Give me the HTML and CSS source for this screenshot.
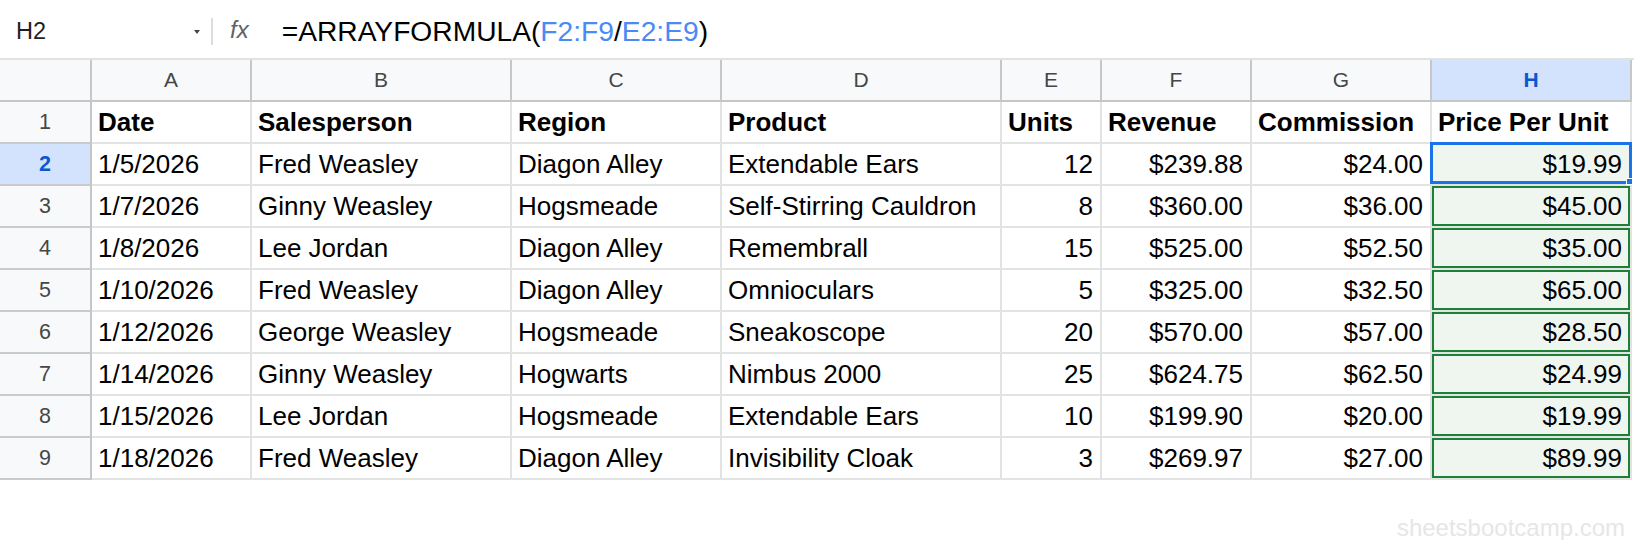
FILE: index.html
```html
<!DOCTYPE html>
<html>
<head>
<meta charset="utf-8">
<link rel="stylesheet" href="styles.css">
</head>
<body>
<div class="formula-bar">
  <div class="namebox"><span class="ref">H2</span><span class="caret"></span></div>
  <div class="sep"></div>
  <div class="fx">fx</div>
  <div class="formula">=ARRAYFORMULA(<span class="rng">F2:F9</span>/<span class="rng">E2:E9</span>)</div>
</div>
<div class="grid">
  <div class="ch corner"></div>
  <div class="ch">A</div><div class="ch">B</div><div class="ch">C</div><div class="ch">D</div>
  <div class="ch">E</div><div class="ch">F</div><div class="ch">G</div><div class="ch ch-sel">H</div>

  <div class="rh">1</div>
  <div class="c b">Date</div><div class="c b">Salesperson</div><div class="c b">Region</div><div class="c b">Product</div>
  <div class="c b">Units</div><div class="c b">Revenue</div><div class="c b">Commission</div><div class="c b">Price Per Unit</div>

  <div class="rh rh-sel">2</div>
  <div class="c">1/5/2026</div><div class="c">Fred Weasley</div><div class="c">Diagon Alley</div><div class="c">Extendable Ears</div>
  <div class="c n">12</div><div class="c n">$239.88</div><div class="c n">$24.00</div><div class="c n out active">$19.99</div>

  <div class="rh">3</div>
  <div class="c">1/7/2026</div><div class="c">Ginny Weasley</div><div class="c">Hogsmeade</div><div class="c">Self-Stirring Cauldron</div>
  <div class="c n">8</div><div class="c n">$360.00</div><div class="c n">$36.00</div><div class="c n out">$45.00</div>

  <div class="rh">4</div>
  <div class="c">1/8/2026</div><div class="c">Lee Jordan</div><div class="c">Diagon Alley</div><div class="c">Remembrall</div>
  <div class="c n">15</div><div class="c n">$525.00</div><div class="c n">$52.50</div><div class="c n out">$35.00</div>

  <div class="rh">5</div>
  <div class="c">1/10/2026</div><div class="c">Fred Weasley</div><div class="c">Diagon Alley</div><div class="c">Omnioculars</div>
  <div class="c n">5</div><div class="c n">$325.00</div><div class="c n">$32.50</div><div class="c n out">$65.00</div>

  <div class="rh">6</div>
  <div class="c">1/12/2026</div><div class="c">George Weasley</div><div class="c">Hogsmeade</div><div class="c">Sneakoscope</div>
  <div class="c n">20</div><div class="c n">$570.00</div><div class="c n">$57.00</div><div class="c n out">$28.50</div>

  <div class="rh">7</div>
  <div class="c">1/14/2026</div><div class="c">Ginny Weasley</div><div class="c">Hogwarts</div><div class="c">Nimbus 2000</div>
  <div class="c n">25</div><div class="c n">$624.75</div><div class="c n">$62.50</div><div class="c n out">$24.99</div>

  <div class="rh">8</div>
  <div class="c">1/15/2026</div><div class="c">Lee Jordan</div><div class="c">Hogsmeade</div><div class="c">Extendable Ears</div>
  <div class="c n">10</div><div class="c n">$199.90</div><div class="c n">$20.00</div><div class="c n out">$19.99</div>

  <div class="rh">9</div>
  <div class="c">1/18/2026</div><div class="c">Fred Weasley</div><div class="c">Diagon Alley</div><div class="c">Invisibility Cloak</div>
  <div class="c n">3</div><div class="c n">$269.97</div><div class="c n">$27.00</div><div class="c n out">$89.99</div>
</div>
<div class="watermark">sheetsbootcamp.com</div>
</body>
</html>
```
FILE: styles.css
```css
html, body {
  margin: 0;
  padding: 0;
  background: #ffffff;
}
body {
  font-family: "Liberation Sans", Arial, sans-serif;
  color: #000000;
  width: 1634px;
  overflow: hidden;
}
.formula-bar {
  height: 58px;
  box-sizing: border-box;
  padding-top: 4px;
  border-bottom: 2px solid #e1e3e1;
  display: flex;
  align-items: center;
  height: 60px;
}
.namebox {
  width: 205px;
  box-sizing: border-box;
  padding: 0 5px 0 16px;
  display: flex;
  align-items: center;
  justify-content: space-between;
  font-size: 23.5px;
  color: #1f1f1f;
}
.caret {
  width: 0;
  height: 0;
  border-left: 3px solid transparent;
  border-right: 3px solid transparent;
  border-top: 4px solid #444746;
  margin-top: 2px;
}
.sep {
  width: 2px;
  height: 27px;
  margin-left: 6px;
  background: #dadce0;
}
.fx {
  margin-left: 17px;
  font-style: italic;
  font-size: 24px;
  color: #5f6368;
  margin-top: -2px;
}
.formula {
  margin-left: 33px;
  font-size: 28.2px;
  color: #000;
}
.rng {
  color: #4a8af4;
}
.grid {
  display: grid;
  grid-template-columns: 92px 160px 260px 210px 280px 100px 150px 180px 200px;
  grid-auto-rows: 42px;
}
.grid > div {
  box-sizing: border-box;
  border-right: 2px solid #e2e3e3;
  border-bottom: 2px solid #e2e3e3;
  white-space: nowrap;
  overflow: visible;
}
.ch {
  background: #f8f9fa;
  border-right-color: #c7c7c7 !important;
  border-bottom-color: #c4c7c5 !important;
  text-align: center;
  font-size: 21px;
  line-height: 40px;
  color: #444746;
}
.ch-sel {
  background: #d3e3fd;
  color: #0b57d0;
  font-weight: bold;
}
.rh {
  background: #f8f9fa;
  border-right-color: #c4c7c5 !important;
  border-bottom-color: #c9cbcb !important;
  text-align: center;
  font-size: 21.5px;
  line-height: 40px;
  color: #444746;
}
.rh-sel {
  background: #d3e3fd;
  color: #0b57d0;
  font-weight: bold;
}
.c {
  font-size: 26px;
  line-height: 41px;
  padding: 0 7px 0 6px;
}
.b {
  font-weight: bold;
}
.n {
  text-align: right;
}
.out {
  background: #eff6f0;
  box-shadow: inset 0 0 0 2px #1e8037;
  padding-right: 8px;
}
.active {
  position: relative;
  box-shadow: none;
}
.active::after {
  content: "";
  position: absolute;
  top: -2px;
  left: -2px;
  right: -2px;
  bottom: 0;
  border: 3px solid #1a73e8;
}
.active::before {
  content: "";
  position: absolute;
  right: -3px;
  bottom: -1px;
  width: 5px;
  height: 5px;
  background: #1a73e8;
  border: 1px solid #ffffff;
  z-index: 2;
}
.watermark {
  padding-top: 36px;
  padding-right: 9px;
  text-align: right;
  font-size: 24px;
  line-height: 24px;
  color: #e6e6e6;
}
```
